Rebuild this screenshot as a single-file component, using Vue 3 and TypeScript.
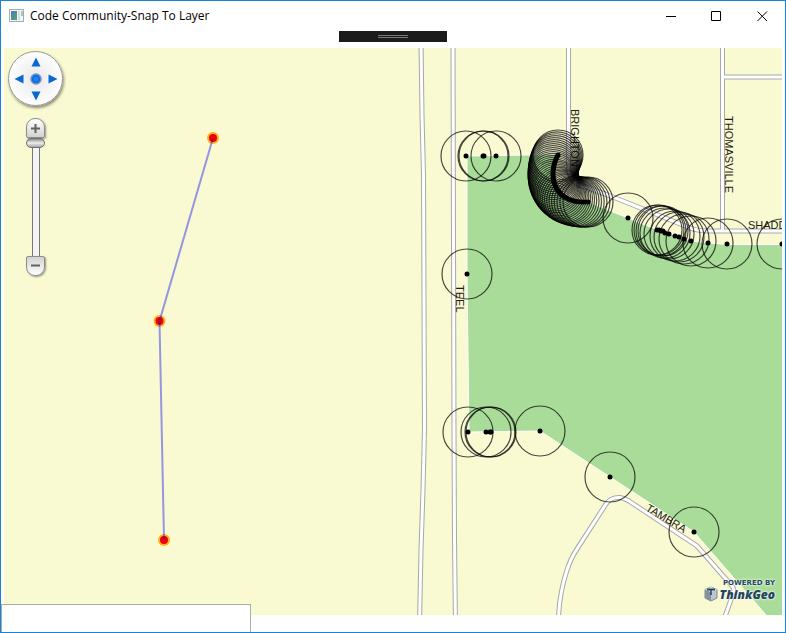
<script setup lang="ts">
import { ref } from 'vue'

interface Point {
  x: number
  y: number
}

const RADIUS = 25
const zoomLevel = ref(20)
const coordinates = ref('')

const pt = (x: number, y: number): Point => ({ x, y })

// Vertices along the rounded corner of the parcel, sampled from a cubic curve.
function sampleCorner(count: number): Point[] {
  const [a, b, c, d] = [pt(558, 155), pt(547, 175), pt(553, 204), pt(588, 202)]
  return Array.from({ length: count }, (_, i) => {
    const t = i / (count - 1)
    const u = 1 - t
    const mix = (k: 'x' | 'y') =>
      u * u * u * a[k] + 3 * u * u * t * b[k] + 3 * u * t * t * c[k] + t * t * t * d[k]
    return pt(mix('x'), mix('y'))
  })
}

const vertices: Point[] = [
  pt(466, 156), pt(483, 156), pt(484, 156), pt(496, 156),
  ...sampleCorner(34),
  pt(628, 218), pt(657, 230), pt(659, 230), pt(661, 231), pt(663, 231), pt(665, 233),
  pt(669, 234), pt(675, 236), pt(679, 237), pt(684, 239), pt(691, 241), pt(708, 243),
  pt(727, 244), pt(782, 244), pt(467, 274), pt(468, 432), pt(486, 432), pt(490, 432),
  pt(491, 432), pt(540, 431), pt(610, 477), pt(694, 532),
]

const roads: string[] = [
  'M421 40L422 115L423.5 175L424 300L424.5 430L423 490L421 550L419.5 625',
  'M453 40L453.5 240L454 430L454.5 540L455.5 625',
  'M568.5 40V166Q569 184 586 187L613 197L663 217L690 228Q698 231 708 231H790',
  'M722.5 40V231',
  'M722.5 77H790',
  'M558.500 625Q558 598 567 570Q571 558 577 549L606 504Q611 497 620 497.500Q624 498 629 501L697 546L732 586Q735 589 733 594L722 625',
]

const snapTrack: Point[] = [pt(213, 138), pt(159.5, 321), pt(164, 540)]
const trackPoints = snapTrack.map((p) => `${p.x},${p.y}`).join(' ')
</script>

<template>
  <div class="window">
    <header class="titlebar">
      <svg class="app-icon" width="16" height="14" viewBox="0 0 16 14" aria-hidden="true">
        <defs>
          <linearGradient id="appPane" x1="0" y1="0" x2="1" y2="1">
            <stop offset="0" stop-color="#4d79ad" />
            <stop offset="1" stop-color="#4fa873" />
          </linearGradient>
        </defs>
        <rect x="0.500" y="0.500" width="14" height="12" fill="#f4f6f8" stroke="#a4adb3" />
        <rect x="2" y="2" width="6" height="9" fill="url(#appPane)" />
        <rect x="9" y="2" width="2" height="9" fill="#d5dade" />
        <rect x="12" y="2" width="2" height="5" fill="#a9c7bd" />
      </svg>
      <h1 class="title">Code Community-Snap To Layer</h1>
      <button class="caption" type="button" aria-label="Minimize">
        <svg width="11" height="11" viewBox="0 0 11 11"><path d="M1 5.500H11" /></svg>
      </button>
      <button class="caption" type="button" aria-label="Maximize">
        <svg width="11" height="11" viewBox="0 0 11 11"><path d="M0.500 0.500H9.500V9.500H0.500Z" /></svg>
      </button>
      <button class="caption" type="button" aria-label="Close">
        <svg width="11" height="11" viewBox="0 0 11 11"><path d="M0.500 0.500L10 10M10 0.500L0.500 10" /></svg>
      </button>
    </header>

    <button class="grip" type="button" aria-label="Expand toolbar"><span class="grip-lines"></span></button>

    <main class="map">
      <svg class="canvas" viewBox="4 48 778 567" preserveAspectRatio="xMinYMin slice" role="img" aria-label="Street map">
        <path
          class="parcel"
          d="M467 156L558 154.500C547 175 553 204 588 202L628 218L658 230L691 241L709 243L727 244.500H800V656L766 615L694 532L610 477L540 431L469 432L467 274Z"
        />
        <path v-for="(d, i) in roads" :key="`c${i}`" class="casing" :d="d" />
        <path v-for="(d, i) in roads" :key="`f${i}`" class="fill" :d="d" />
        <g class="labels">
          <text transform="translate(571 109) rotate(90)">BRIGHTON</text>
          <text transform="translate(725 116) rotate(90)">THOMASVILLE</text>
          <text transform="translate(456 285) rotate(90)">TEEL</text>
          <text transform="translate(645 510) rotate(31)">TAMBRA</text>
          <text x="748" y="229">SHADDOCK</text>
        </g>
        <g class="tolerance">
          <circle v-for="(p, i) in vertices" :key="i" :cx="p.x" :cy="p.y" :r="RADIUS" />
        </g>
        <circle v-for="(p, i) in vertices" :key="`d${i}`" :cx="p.x" :cy="p.y" r="2.500" />
        <g v-for="(p, i) in snapTrack" :key="`s${i}`">
          <circle :cx="p.x" :cy="p.y" r="6" fill="#ffb01c" />
          <circle :cx="p.x" :cy="p.y" r="4" fill="#f00000" />
        </g>
        <polyline class="track" :points="trackPoints" />
      </svg>

      <div class="controls">
        <div class="pan">
          <button class="up" type="button" aria-label="Pan up"><svg width="10" height="10" viewBox="0 0 10 10"><path d="M5 0.500L9.500 9.500H0.500Z" /></svg></button>
          <button class="left" type="button" aria-label="Pan left"><svg width="10" height="10" viewBox="0 0 10 10"><path d="M0.500 5L9.500 0.500V9.500Z" /></svg></button>
          <button class="home" type="button" aria-label="Full extent"><svg width="12" height="12" viewBox="0 0 12 12"><circle cx="6" cy="6" r="5" fill="#0a6fe0" stroke="#7c8fc0" stroke-width="1.500" /><circle cx="6" cy="6" r="2.500" fill="#1c84f2" /></svg></button>
          <button class="right" type="button" aria-label="Pan right"><svg width="10" height="10" viewBox="0 0 10 10"><path d="M9.500 5L0.500 0.500V9.500Z" /></svg></button>
          <button class="down" type="button" aria-label="Pan down"><svg width="10" height="10" viewBox="0 0 10 10"><path d="M5 9.500L9.500 0.500H0.500Z" /></svg></button>
        </div>
        <div class="zoom">
          <button class="zoom-in" type="button" aria-label="Zoom in"><svg width="9" height="9" viewBox="0 0 9 9"><path d="M0 4.500H9M4.500 0V9" /></svg></button>
          <input v-model.number="zoomLevel" class="zoom-bar" type="range" min="1" max="20" aria-label="Zoom level" />
          <button class="zoom-out" type="button" aria-label="Zoom out"><svg width="9" height="9" viewBox="0 0 9 9"><path d="M0 3.500H9" /></svg></button>
        </div>
      </div>

      <div class="brand">
        <svg width="14" height="16" viewBox="0 0 14 16" aria-hidden="true">
          <path d="M7 1L13 3.500V12L7 15L1 12V3.500Z" fill="#bcc6cd" stroke="#7d8b95" />
          <path d="M7 6V15L1 12V3.500Z" fill="#84929c" />
          <path d="M1 3.500L7 1L13 3.500L7 6Z" fill="#e6ecef" />
          <path d="M3 3.500H11" stroke="#24465a" stroke-width="2" />
          <path d="M7 3.500V9" stroke="#24465a" stroke-width="1.500" />
        </svg>
        <p class="brand-text"><small>POWERED BY</small><strong>ThinkGeo</strong></p>
      </div>
    </main>

    <input v-model="coordinates" class="status" type="text" aria-label="Coordinates" readonly />
  </div>
</template>

<style>
body {
  margin: 0;
}
</style>

<style scoped>
.window {
  position: relative;
  display: flex;
  flex-direction: column;
  box-sizing: border-box;
  min-height: 100vh;
  padding-bottom: 17px;
  border: 1px solid #1883d7;
  background: #fff;
  font-family: "Open Sans", "Noto Sans", sans-serif;
}

button {
  display: flex;
  align-items: center;
  justify-content: center;
  margin: 0;
  padding: 0;
  border: 0;
  background: none;
}

.titlebar {
  display: flex;
  align-items: center;
  height: 30px;
  padding-left: 8px;
}

.title {
  flex: 1;
  margin: 0 0 0 5px;
  font-size: 12px;
  font-weight: 400;
  line-height: 16px;
  color: #000;
}

.caption {
  width: 46px;
  height: 28px;
}

.caption path {
  fill: none;
  stroke: #000;
}

.grip {
  align-self: center;
  width: 108px;
  height: 11px;
  margin-bottom: 6px;
  background: #1b1b1b;
}

.grip-lines {
  width: 30px;
  height: 1px;
  border-top: 1px solid #777;
  border-bottom: 1px solid #777;
}

.map {
  position: relative;
  flex: 1;
  min-height: 300px;
  margin: 0 3px;
  overflow: hidden;
  background: #f9f9d2;
}

.canvas {
  position: absolute;
  inset: 0;
  width: 100%;
  height: 100%;
}

.parcel {
  fill: #a9dc98;
  stroke: #fff;
  stroke-width: 1;
}

.casing,
.fill {
  fill: none;
  stroke: #a8a8ac;
  stroke-width: 5;
}

.fill {
  stroke: #fff;
  stroke-width: 3;
}

.labels {
  font-family: "Liberation Sans", Arial, sans-serif;
  font-size: 11px;
  fill: #1c1c14;
}

.tolerance {
  fill: none;
  stroke: #000;
  stroke-opacity: 0.7;
  stroke-width: 1.2;
}

.track {
  fill: none;
  stroke: #0000ff;
  stroke-opacity: 0.4;
  stroke-width: 2;
}

.controls {
  position: absolute;
  top: 3px;
  left: 4px;
  display: flex;
  flex-direction: column;
  align-items: center;
  gap: 12px;
}

.pan {
  display: grid;
  grid-template: repeat(3, 17px) / repeat(3, 17px);
  grid-template-areas: ". up ." "left home right" ". down .";
  place-content: center;
  box-sizing: border-box;
  width: 55px;
  height: 55px;
  border: 1px solid #999;
  border-radius: 50%;
  background: radial-gradient(circle at 50% 50%, #e8e8ea, #fff 75%);
  box-shadow: 1px 2px 3px rgba(0, 0, 0, 0.45);
  fill: #0a68d4;
}

.up { grid-area: up; }
.left { grid-area: left; }
.home { grid-area: home; }
.right { grid-area: right; }
.down { grid-area: down; }

.zoom {
  display: flex;
  flex-direction: column;
  align-items: center;
}

.zoom-in,
.zoom-out {
  box-sizing: border-box;
  width: 19px;
  height: 20px;
  border: 1px solid #8c8c8c;
  border-radius: 9px 9px 2px 2px;
  background: linear-gradient(#fff, #d2d2d2);
  box-shadow: 1px 1px 2px rgba(0, 0, 0, 0.4);
  stroke: #606060;
  stroke-width: 2;
}

.zoom-out {
  border-radius: 2px 2px 9px 9px;
  background: linear-gradient(#d2d2d2, #fff);
}

.zoom-bar {
  writing-mode: vertical-lr;
  direction: rtl;
  appearance: none;
  width: 19px;
  height: 118px;
  margin: 0;
  background: linear-gradient(90deg, transparent 6px, #777 6px 7px, #f4f4f4 7px 13px, #777 13px 14px, transparent 14px);
}

.zoom-bar::-webkit-slider-runnable-track {
  width: 19px;
}

.zoom-bar::-webkit-slider-thumb {
  appearance: none;
  box-sizing: border-box;
  width: 19px;
  height: 10px;
  border: 1px solid #707070;
  border-radius: 5px;
  background: linear-gradient(#8a8a8a, #eee 50%, #a6a6a6);
}

.brand {
  position: absolute;
  right: 7px;
  bottom: 13px;
  display: flex;
  align-items: flex-end;
  gap: 2px;
}

.brand-text {
  display: flex;
  flex-direction: column;
  align-items: flex-end;
  margin: 0;
  color: #24465a;
  text-shadow: 0 0 2px #fff, 0 0 3px #fff;
}

.brand-text small {
  font-family: "DejaVu Sans", sans-serif;
  font-size: 7px;
  font-weight: 700;
  line-height: 9px;
}

.brand-text strong {
  font-size: 12px;
  font-style: italic;
  font-weight: 800;
  line-height: 14px;
}

.status {
  position: absolute;
  bottom: 0;
  left: 0;
  box-sizing: border-box;
  width: 250px;
  height: 28px;
  padding: 0 4px;
  border: 1px solid #ababab;
  border-bottom: 0;
  background: #fff;
  font: inherit;
  font-size: 12px;
}
</style>
